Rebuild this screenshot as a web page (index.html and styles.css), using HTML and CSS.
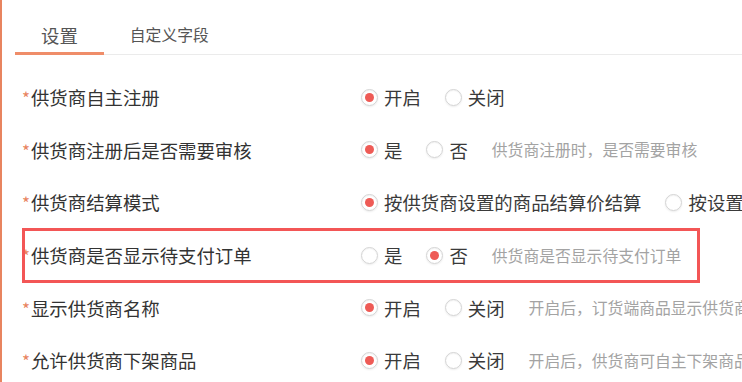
FILE: index.html
```html
<!DOCTYPE html>
<html lang="zh-CN">

<head>
    <meta charset="UTF-8">
    <meta name="viewport" content="width=device-width, initial-scale=1.0">
    <title>供货商设置</title>
    <link rel="stylesheet" href="styles.css">
</head>

<body>
    <div class="page">
        <div class="tabs">
            <div class="tab active">设置</div>
            <div class="tab">自定义字段</div>
        </div>

        <form class="settings">
            <div class="row">
                <div class="label"><span class="req">*</span>供货商自主注册</div>
                <div class="options">
                    <label class="option"><span class="radio checked"></span>开启</label>
                    <label class="option"><span class="radio"></span>关闭</label>
                </div>
            </div>

            <div class="row">
                <div class="label"><span class="req">*</span>供货商注册后是否需要审核</div>
                <div class="options">
                    <label class="option"><span class="radio checked"></span>是</label>
                    <label class="option"><span class="radio"></span>否</label>
                    <span class="hint">供货商注册时，是否需要审核</span>
                </div>
            </div>

            <div class="row">
                <div class="label"><span class="req">*</span>供货商结算模式</div>
                <div class="options">
                    <label class="option"><span class="radio checked"></span>按供货商设置的商品结算价结算</label>
                    <label class="option"><span class="radio"></span>按设置的结算比例结算</label>
                </div>
            </div>

            <div class="row marked">
                <div class="label"><span class="req">*</span>供货商是否显示待支付订单</div>
                <div class="options">
                    <label class="option"><span class="radio"></span>是</label>
                    <label class="option"><span class="radio checked"></span>否</label>
                    <span class="hint">供货商是否显示待支付订单</span>
                </div>
            </div>

            <div class="row">
                <div class="label"><span class="req">*</span>显示供货商名称</div>
                <div class="options">
                    <label class="option"><span class="radio checked"></span>开启</label>
                    <label class="option"><span class="radio"></span>关闭</label>
                    <span class="hint">开启后，订货端商品显示供货商名称</span>
                </div>
            </div>

            <div class="row">
                <div class="label"><span class="req">*</span>允许供货商下架商品</div>
                <div class="options">
                    <label class="option"><span class="radio checked"></span>开启</label>
                    <label class="option"><span class="radio"></span>关闭</label>
                    <span class="hint">开启后，供货商可自主下架商品</span>
                </div>
            </div>
        </form>
    </div>
</body>

</html>
```

FILE: styles.css
```css
html,
body {
    margin: 0;
    height: 100%;
    overflow: hidden;
    background-color: #ffffff;
}

body {
    font-family: "Noto Sans CJK SC", "Noto Sans", sans-serif;
    color: #333333;
}

.page {
    height: 100%;
    border-left: 2px solid #e8845f;
    box-sizing: border-box;
}

.tabs {
    display: flex;
    margin-left: 13px;
    border-bottom: 1px solid #ebebeb;
}

.tab {
    padding: 22px 26px 4px;
    line-height: 26px;
    font-size: 15.8px;
    color: #555555;
    border-bottom: 3px solid transparent;
    margin-bottom: -1px;
    white-space: nowrap;
}

.tab.active {
    font-size: 18.4px;
    border-bottom-color: #ef8d69;
}

.settings {
    margin-top: 16px;
    padding-left: 20px;
}

.row {
    position: relative;
    display: flex;
    align-items: center;
    height: 52.6px;
    white-space: nowrap;
}

.label {
    width: 339px;
    flex-shrink: 0;
    font-size: 18.4px;
    color: #333333;
}

.req {
    color: #e8845f;
    font-size: 17px;
    margin-right: 1px;
}

.options {
    display: flex;
    align-items: center;
}

.option {
    display: flex;
    align-items: center;
    font-size: 18.4px;
    color: #3a3a3a;
    margin-right: 24px;
}

.radio {
    width: 15px;
    height: 15px;
    border: 1px solid #d4d4d4;
    border-radius: 50%;
    margin-right: 6px;
    display: flex;
    align-items: center;
    justify-content: center;
    box-shadow: 0 1px 2px rgba(0, 0, 0, 0.08), inset 0 1px 1px rgba(0, 0, 0, 0.05);
    flex-shrink: 0;
}

.radio.checked::after {
    content: "";
    width: 9px;
    height: 9px;
    border-radius: 50%;
    background-color: #ee5b56;
}

.hint {
    font-size: 15.8px;
    color: #a3a3a3;
}

/* annotation box drawn over the highlighted row */
.row.marked::after {
    content: "";
    position: absolute;
    left: 0;
    top: -1px;
    width: 678px;
    height: 55px;
    border: 3px solid #f35656;
    box-sizing: border-box;
    pointer-events: none;
}
```
